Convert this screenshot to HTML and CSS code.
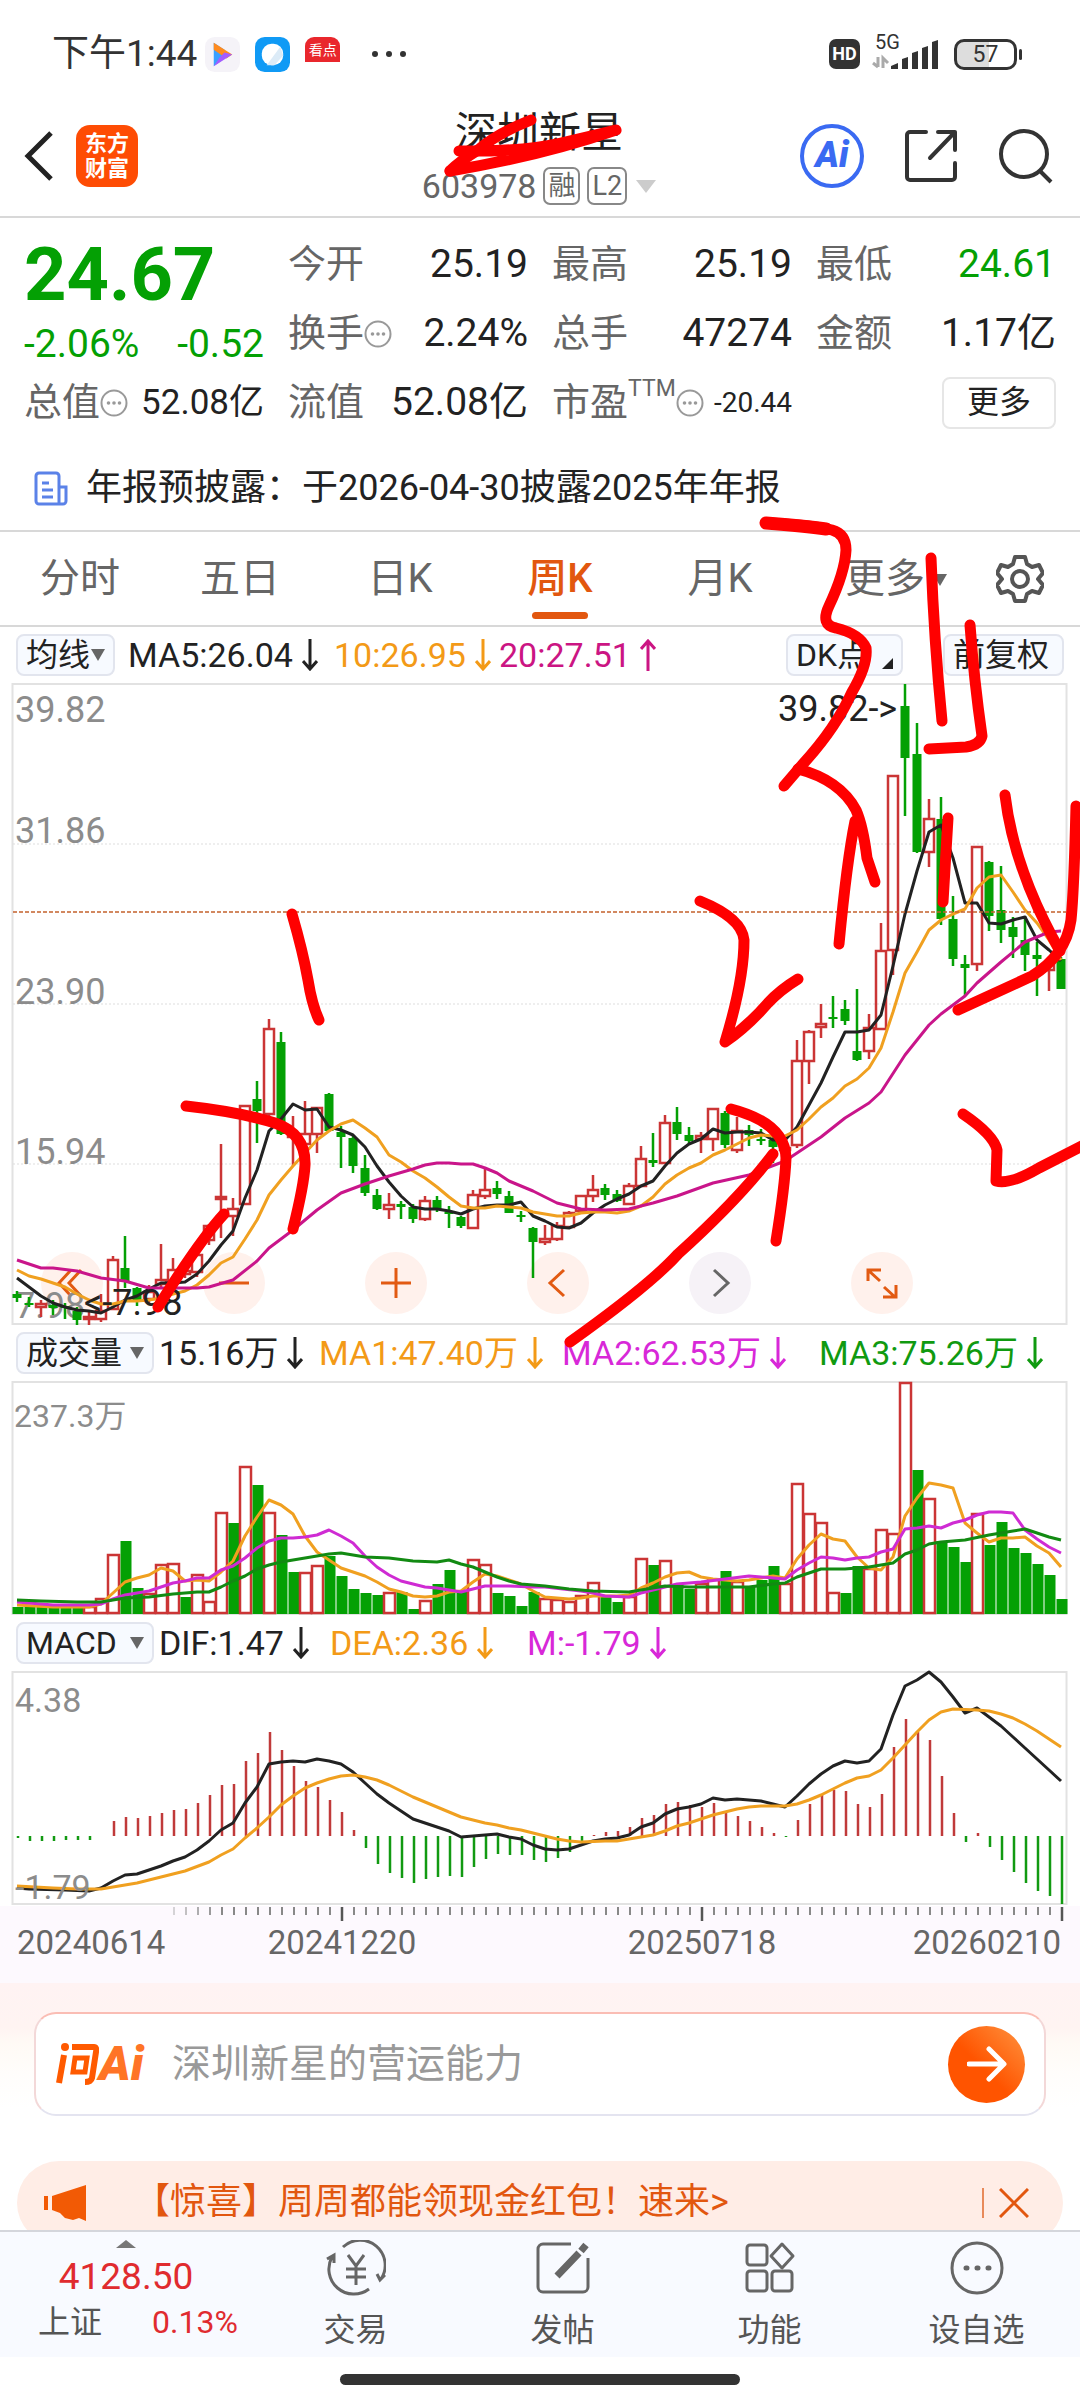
FILE: index.html
```html
<!DOCTYPE html>
<html lang="zh-CN">
<head>
<meta charset="utf-8">
<meta name="viewport" content="width=device-width, initial-scale=1">
<title>深圳新星 603978</title>
<link rel="stylesheet" href="styles.css">
</head>
<body>
<svg class="defs" aria-hidden="true">
  <symbol id="down" viewBox="0 0 16 32"><path d="M8 0V30M1 22l7 8 7-8" fill="none" stroke="currentColor" stroke-width="3"/></symbol>
  <symbol id="up" viewBox="0 0 16 32"><path d="M8 32V2M1 10l7-8 7 8" fill="none" stroke="currentColor" stroke-width="3"/></symbol>
  <symbol id="info" viewBox="0 0 28 28"><circle cx="14" cy="14" r="12.5" fill="none" stroke="#999" stroke-width="2"/><circle cx="8.500" cy="14" r="1.800" fill="#999"/><circle cx="14" cy="14" r="1.800" fill="#999"/><circle cx="19.500" cy="14" r="1.800" fill="#999"/></symbol>
</svg>

<div class="status">
  <span class="clock">下午1:44</span>
  <svg class="app" viewBox="0 0 36 36"><rect width="36" height="36" rx="10" fill="#f5f3f8"/><path d="M9 6L20 13v9L9 30z" fill="#3aa0ff"/><path d="M9 6L28 18 22 22 9 13z" fill="#ff8b1f"/><path d="M28 18L9 30l6-9 5-5z" fill="#a45cff"/></svg>
  <svg class="app" viewBox="0 0 36 36"><rect width="36" height="36" rx="10" fill="#109af5"/><rect x="7" y="7" width="22" height="22" rx="10" fill="#fff"/><path d="M26 10l3 9-9 10-8 0z" fill="#dcebf7"/></svg>
  <span class="app kandian">看点</span>
  <svg class="dots" viewBox="0 0 36 8"><circle cx="4" cy="4" r="3" fill="#333"/><circle cx="18" cy="4" r="3" fill="#333"/><circle cx="32" cy="4" r="3" fill="#333"/></svg>
  <span class="hd">HD</span>
  <div class="signal"><small>5G</small><svg width="70" height="36" viewBox="0 0 70 36"><path d="M6 31V21M1 27l5 4M11 32V22l5 5" stroke="#aaa" stroke-width="3" fill="none"/><path d="M19 33v-3l7-3v6zM30 33V23l6-2v12zM40 33V17l6-2v18zM50 33V12l6-2v23zM60 33V6l6-2v29z" fill="#333"/></svg></div>
  <span class="battery">57</span>
</div>

<header class="top">
  <div class="top-left">
    <button class="icon-btn" aria-label="返回"><svg width="30" height="52" viewBox="0 0 30 52"><path d="M27 3L4 26l23 23" fill="none" stroke="#222" stroke-width="5"/></svg></button>
    <a class="logo" href="#">东方<br>财富</a>
  </div>
  <div class="title">
    <h1>深圳新星</h1>
    <p><span>603978</span><b>融</b><b>L2</b><i class="tri wide"></i></p>
  </div>
  <div class="top-right">
    <button class="ai">Ai</button>
    <button class="icon-btn" aria-label="分享"><svg width="54" height="54" viewBox="0 0 54 54"><path d="M22 3H6a3 3 0 0 0-3 3v42a3 3 0 0 0 3 3h42a3 3 0 0 0 3-3V34M34 3h17v18M51 3L26 29" fill="none" stroke="#333" stroke-width="4" stroke-linecap="round" stroke-linejoin="round"/></svg></button>
    <button class="icon-btn" aria-label="搜索"><svg width="56" height="56" viewBox="0 0 56 56"><circle cx="26" cy="26" r="23" fill="none" stroke="#333" stroke-width="4"/><path d="M42 43l11 11" stroke="#333" stroke-width="4"/></svg></button>
  </div>
</header>

<main>
<section class="quote">
  <div class="price">
    <strong>24.67</strong>
    <div><span>-2.06%</span><span>-0.52</span></div>
  </div>
  <div class="stat"><span>今开</span><em>25.19</em></div>
  <div class="stat"><span>最高</span><em>25.19</em></div>
  <div class="stat"><span>最低</span><em class="green">24.61</em></div>
  <div class="stat"><span>换手<svg class="info"><use href="#info"/></svg></span><em>2.24%</em></div>
  <div class="stat"><span>总手</span><em>47274</em></div>
  <div class="stat"><span>金额</span><em>1.17亿</em></div>
  <div class="stat"><span>总值<svg class="info"><use href="#info"/></svg></span><em class="mid">52.08亿</em></div>
  <div class="stat"><span>流值</span><em>52.08亿</em></div>
  <div class="stat"><span>市盈<sup>TTM</sup><svg class="info"><use href="#info"/></svg></span><em class="small">-20.44</em></div>
  <button class="more">更多</button>
</section>

<a class="notice" href="#">
  <svg width="34" height="36" viewBox="0 0 34 36"><path d="M25 33V5a3 3 0 0 0-3-3H5a3 3 0 0 0-3 3v25a3 3 0 0 0 3 3h24a3 3 0 0 0 3-3V16h-7" fill="none" stroke="#5b82e8" stroke-width="3"/><path d="M8 12h7M8 19h11M8 26h11" stroke="#5b82e8" stroke-width="3"/></svg>
  <span>年报预披露：于2026-04-30披露2025年年报</span>
</a>

<nav class="tabs">
  <button>分时</button><button>五日</button><button>日K</button><button class="on">周K</button><button>月K</button><button class="drop">更多<i class="tri"></i></button>
  <button class="gear" aria-label="设置"><svg width="48" height="50" viewBox="0 0 48 50"><path d="M19 3h10l2 7 5 3 7-2 4 8-5 6 5 6-4 8-7-2-5 3-2 7H19l-2-7-5-3-7 2-4-8 5-6-5-6 4-8 7 2 5-3z" fill="none" stroke="#555" stroke-width="4" stroke-linejoin="round"/><circle cx="24" cy="25" r="8" fill="none" stroke="#555" stroke-width="4"/></svg></button>
</nav>

<section class="charts">
  <div class="legend ma">
    <button class="chip">均线<i class="tri"></i></button>
    <span>MA5:26.04<svg><use href="#down"/></svg></span>
    <span class="c-orange">10:26.95<svg><use href="#down"/></svg></span>
    <span class="c-pink">20:27.51<svg><use href="#up"/></svg></span>
    <button class="chip">DK点<i class="corner"></i></button>
    <button class="chip adj">前复权</button>
  </div>
  <div class="kline">
    <div class="tools">
      <button aria-label="最早"><svg viewBox="0 0 62 62"><path d="M30 18L18 31l12 13M40 18L28 31l12 13" /></svg></button>
      <button aria-label="缩小"><svg viewBox="0 0 62 62"><path d="M16 31h30"/></svg></button>
      <button aria-label="放大"><svg viewBox="0 0 62 62"><path d="M16 31h30M31 16v30"/></svg></button>
      <button aria-label="向左"><svg viewBox="0 0 62 62"><path d="M37 18L23 31l14 13"/></svg></button>
      <button class="off" aria-label="向右"><svg viewBox="0 0 62 62"><path d="M25 18l14 13-14 13"/></svg></button>
      <button aria-label="全屏"><svg viewBox="0 0 62 62"><path d="M17 29V18h13M18 19l11 10M33 35l11 10M45 33v12H32"/></svg></button>
    </div>
    <svg id="kline" class="plot" viewBox="0 0 1080 643"></svg>
  </div>
  <div class="legend vol">
    <button class="chip">成交量<i class="tri"></i></button>
    <span>15.16万<svg><use href="#down"/></svg></span>
    <span class="c-orange">MA1:47.40万<svg><use href="#down"/></svg></span>
    <span class="c-magenta">MA2:62.53万<svg><use href="#down"/></svg></span>
    <span class="c-green">MA3:75.26万<svg><use href="#down"/></svg></span>
  </div>
  <svg id="volume" class="plot" viewBox="0 0 1080 236"></svg>
  <div class="legend macd">
    <button class="chip">MACD<i class="tri"></i></button>
    <span>DIF:1.47<svg><use href="#down"/></svg></span>
    <span class="c-orange">DEA:2.36<svg><use href="#down"/></svg></span>
    <span class="c-magenta">M:-1.79<svg><use href="#down"/></svg></span>
  </div>
  <svg id="macd" class="plot" viewBox="0 0 1080 236"></svg>
  <svg id="axis" class="plot axis" viewBox="0 0 1080 77"></svg>
</section>

<section class="ask">
  <form class="ask-box">
    <label for="q"><svg width="44" height="42" viewBox="0 0 44 42"><g fill="none" stroke="#ff5a00" stroke-width="6"><path d="M9 12L4 40M17 4h22q3 0 2 5l-4 26q-1 4-7 4"/><path d="M20 15h12l-2 14H18z" stroke-width="5"/></g><circle cx="10" cy="4" r="4" fill="#ff5a00"/></svg><b>Ai</b></label>
    <input id="q" type="text" placeholder="深圳新星的营运能力">
    <button aria-label="提问"><svg width="40" height="36" viewBox="0 0 40 36"><path d="M2 18h34M22 3l15 15-15 15" fill="none" stroke="#fff" stroke-width="5" stroke-linecap="round" stroke-linejoin="round"/></svg></button>
  </form>
</section>

<aside class="promo">
  <svg width="42" height="38" viewBox="0 0 42 38"><path d="M0 12h4v14H0zM8 12L42 1v36l-7-3-6 2-8-2-5-5-8-3z" fill="#f25a05"/></svg>
  <a href="#">【惊喜】周周都能领现金红包！速来&gt;</a>
  <button aria-label="关闭"><svg width="30" height="30" viewBox="0 0 30 30"><path d="M1 1l28 28M29 1L1 29" stroke="#e2570f" stroke-width="3"/></svg></button>
</aside>
</main>

<footer class="dock">
  <nav>
    <a class="index" href="#"><i class="tri rise"></i><strong>4128.50</strong><span><em>上证</em><b>0.13%</b></span></a>
    <a href="#"><svg viewBox="0 0 60 56"><path d="M17 7a25 25 0 0 1 38 32M43 49A25 25 0 0 1 6 17M1 19l7-4v8M59 35l-5 5-3-6M22 15l8 11 8-11M30 26v19M20 29h20M20 37h20"/></svg>交易</a>
    <a href="#"><svg viewBox="0 0 60 56"><path d="M38 4H10a5 5 0 0 0-5 5v38a5 5 0 0 0 5 5h40a5 5 0 0 0 5-5V18"/><path d="M53 5l-5 6M46 13L24 36" stroke-width="7"/></svg>发帖</a>
    <a href="#"><svg viewBox="0 0 60 56"><rect x="7" y="5" width="20" height="20" rx="3"/><rect x="7" y="31" width="20" height="20" rx="3"/><rect x="32" y="31" width="20" height="20" rx="3"/><path d="M42 4l11 12-11 12-11-12z" stroke-linejoin="round"/></svg>功能</a>
    <a href="#"><svg viewBox="0 0 60 56"><circle cx="30" cy="28" r="25"/><path d="M19 28h1M30 28h1M41 28h1" stroke-width="5" stroke-linecap="round"/></svg>设自选</a>
  </nav>
  <div class="home"></div>
</footer>

<svg class="marks" viewBox="0 0 1080 2400" aria-hidden="true">
  <g fill="none" stroke="#f00" stroke-width="11" stroke-linecap="round" stroke-linejoin="round">
    <path d="M531 120Q496 134 478 150Q460 161 450 171"/>
    <path d="M459 151L512 149L560 143L616 131L560 147L510 161L452 171L510 155Z" fill="#f00" stroke="none"/>
    <path d="M459 151Q520 152 561 143L616 130Q540 156 450 171"/>
    <path d="M766 523Q812 525 832 530Q846 534 846 550Q845 572 829 606Q820 625 836 628Q860 634 866 648Q868 665 852 692Q836 728 802 765L784 786"/>
    <path d="M766 523Q805 526 826 529" stroke-width="13"/>
    <path d="M798 769Q840 780 856 810Q863 826 867 858L875 882M855 821Q847 860 839 944"/>
    <path d="M700 901Q742 918 744 940Q744 980 725 1042Q747 1027 768 1003Q780 990 798 979"/>
    <path d="M292 914Q303 952 308 980Q312 1005 319 1020"/>
    <path d="M186 1106Q240 1112 275 1123Q306 1134 305 1165Q304 1185 293 1229"/>
    <path d="M224 1214Q200 1240 158 1307"/>
    <path d="M773 1154Q740 1198 678 1254Q650 1285 570 1342"/>
    <path d="M731 1109Q785 1123 786 1158Q785 1185 776 1241"/>
    <path d="M931 558Q934 640 942 721"/>
    <path d="M970 625Q974 680 982 736Q980 745 966 747L929 749"/>
    <path d="M948 818L943 902"/>
    <path d="M1005 795Q1014 870 1060 951"/>
    <path d="M1076 806Q1074 890 1071 920Q1066 955 1032 976Q1010 986 958 1010"/>
    <path d="M963 1114Q994 1135 997 1150L996 1181Q1010 1185 1039 1168L1084 1145"/>
  </g>
</svg>
<script src="chart.js"></script>
</body>
</html>
```
FILE: styles.css
```css
* { box-sizing: border-box; }
body { margin: 0; background: #fff; color: #222; font-family: Roboto, "Noto Sans CJK SC", sans-serif; font-size: 34px; line-height: 1.2; position: relative; }
h1, p { margin: 0; font-weight: 400; }
button { font: inherit; color: inherit; background: none; border: 0; padding: 0; }
a { color: inherit; text-decoration: none; }
em, i { font-style: normal; }
svg { display: block; }
.defs { position: absolute; width: 0; height: 0; }

.tri { display: inline-block; border: 7px solid transparent; border-top: 12px solid #666; border-bottom: 0; }
.tri.wide { border-width: 13px 10px 0; border-top-color: #ccc; }
.tri.rise { border: 10px solid transparent; border-top: 0; border-bottom: 8px solid #777; }

.status { display: flex; align-items: center; height: 96px; padding: 12px 63px 0 52px; color: #333; }
.clock { font-size: 37px; margin-right: 8px; }
.app { width: 35px; height: 35px; margin-right: 15px; }
.kandian { background: linear-gradient(#e9272d 72%, #fff 72%); border-radius: 9px; color: #fff; font-size: 14px; line-height: 26px; text-align: center; }
.dots { width: 36px; height: 8px; margin: 0 auto 0 16px; }
.hd { background: #333; color: #fff; border-radius: 7px; font-size: 18px; font-weight: 700; line-height: 30px; width: 31px; text-align: center; }
.signal { position: relative; width: 70px; margin: 0 12px; }
.signal small { position: absolute; left: 3px; top: -6px; font-size: 20px; line-height: 24px; }
.battery { position: relative; width: 63px; height: 31px; border: 3px solid #333; border-radius: 10px; text-align: center; font-size: 23px; line-height: 26px; background: linear-gradient(90deg, #ddd 57%, #fff 57%); }
.battery::after { content: ""; position: absolute; right: -8px; top: 7px; width: 3px; height: 11px; background: #333; border-radius: 2px; }

.top { display: grid; grid-template-columns: 1fr auto 1fr; align-items: center; height: 122px; padding: 0 26px 0 24px; border-bottom: 2px solid #d8d8d8; }
.top-left { display: flex; align-items: center; gap: 22px; }
.logo { width: 62px; height: 62px; border-radius: 14px; background: #fe4c04; color: #fff; font-size: 22px; font-weight: 700; line-height: 25px; padding-top: 6px; text-align: center; }
.title { text-align: center; }
.title h1 { font-size: 42px; line-height: 60px; }
.title p { display: flex; align-items: center; justify-content: center; height: 46px; color: #666; font-size: 34px; }
.title b { margin-left: 7px; height: 38px; padding: 0 3px; border: 2px solid #888; border-radius: 7px; font-weight: 400; font-size: 27px; line-height: 34px; }
.title .tri { margin-left: 9px; }
.top-right { display: flex; align-items: center; justify-content: flex-end; gap: 40px; }
.ai { width: 64px; height: 64px; border: 4px solid #3a6af2; border-radius: 50%; color: #3a6af2; font-size: 36px; font-weight: 900; font-style: italic; }

.quote { display: grid; grid-template-columns: repeat(4, 1fr); grid-auto-rows: 69px; column-gap: 24px; padding: 12px 24px 0; }
.price { grid-row: span 2; color: #04a004; }
.price strong { display: block; font-size: 74px; font-weight: 700; line-height: 90px; }
.price div { display: flex; justify-content: space-between; font-size: 39px; line-height: 48px; }
.stat { display: flex; align-items: center; justify-content: space-between; font-size: 39px; white-space: nowrap; }
.stat span { display: flex; align-items: center; color: #666; font-size: 38px; }
.stat em.mid { font-size: 35px; }
.stat em.small { font-size: 28px; }
.stat .green { color: #04a004; }
.stat sup { align-self: flex-start; font-size: 23px; line-height: 18px; }
.info { width: 28px; height: 28px; }
.more { justify-self: end; align-self: center; width: 114px; height: 52px; border: 2px solid #e6e6e6; border-radius: 8px; font-size: 32px; }

.notice { display: flex; align-items: center; gap: 18px; height: 95px; padding: 10px 34px 0; border-bottom: 2px solid #d8d8d8; font-size: 36px; white-space: nowrap; }

.tabs { display: grid; grid-template-columns: repeat(6, 4fr) 3fr; height: 95px; border-bottom: 2px solid #d8d8d8; font-size: 40px; color: #666; }
.tabs button { position: relative; }
.tabs .drop { padding-left: 32px; white-space: nowrap; }
.tabs .tri { margin: 0 0 6px 8px; }
.tabs .on { color: #e2570f; font-weight: 500; }
.tabs .on::after { content: ""; position: absolute; left: 50%; bottom: 6px; width: 56px; height: 7px; margin-left: -28px; border-radius: 4px; background: #e2570f; }
.gear svg { margin: 0 auto; }

.legend { display: grid; align-items: center; height: 54px; padding: 0 16px; white-space: nowrap; }
.legend.ma { height: 56px; grid-template-columns: 112px 206px 165px 1fr 117px 161px; }
.legend.vol { grid-template-columns: 143px 160px 243px 257px 1fr; }
.legend.macd { grid-template-columns: 143px 171px 197px 1fr; }
.legend span { display: flex; align-items: center; gap: 9px; }
.legend span svg { width: 16px; height: 32px; }
.chip { display: flex; align-items: center; justify-content: space-between; height: 42px; padding: 0 8px; border: 2px solid #e2e5ee; border-radius: 8px; background: #f7faff; font-size: 32px; line-height: 38px; }
.ma .chip:first-child { width: 99px; }
.chip.adj { justify-self: end; width: 121px; }
.vol .chip, .macd .chip { width: 138px; }
.corner { align-self: flex-end; margin-bottom: 5px; border-left: 11px solid transparent; border-bottom: 11px solid #222; }
.c-orange { color: #f39a17; }
.c-pink { color: #cb1583; }
.c-magenta { color: #d828d8; }
.c-green { color: #109a10; }

.plot { width: 100%; height: auto; position: relative; pointer-events: none; }
.kline { position: relative; }
.tools { position: absolute; left: 3.8%; right: 15.5%; bottom: 12px; display: flex; justify-content: space-between; }
.tools button { width: 62px; height: 62px; border-radius: 50%; background: #fff1ec; }
.tools .off { background: #f6f2f7; }
.tools path { fill: none; stroke: #e25a12; stroke-width: 3; }
.tools .off path { stroke: #666; }
.axis { background: #fdf9fe; }

.ask { padding: 29px 34px 45px; background: linear-gradient(#fff3f3 0, #fff4f2 45px, #fffaf5 60px, #fffdfb 90px, #fff 125px); }
.ask-box { display: flex; align-items: center; height: 104px; padding: 0 19px; border: 2px solid #f3d8d8; border-top-color: #fabdb4; border-bottom-color: #e4e4f0; border-radius: 22px; background: #fff; }
.ask-box label { display: flex; align-items: center; width: 93px; color: #ff7426; }
.ask-box b { font-size: 48px; font-weight: 900; font-style: italic; line-height: 48px; }
.ask-box input { flex: 1; min-width: 0; margin: 0 24px; border: 0; outline: 0; padding: 0; font: inherit; font-size: 39px; background: none; }
.ask-box input::placeholder { color: #999; opacity: 1; }
.ask-box button { display: grid; place-items: center; width: 77px; height: 77px; border-radius: 50%; background: linear-gradient(45deg, #ff5400 45%, #ff9440); }

.promo { display: flex; align-items: center; height: 84px; margin: 0 17px 155px; padding: 0 34px 0 27px; border-radius: 42px; background: #ffede6; color: #e2570f; font-size: 36px; }
.promo a { flex: 1; margin-left: 48px; white-space: nowrap; }
.promo button { padding-left: 15px; border-left: 2px solid #e88a5a; }

.dock { position: fixed; left: 0; right: 0; bottom: 0; background: #fff; }
.dock nav { display: grid; grid-template-columns: 252px repeat(4, 1fr); height: 127px; background: #f8faff; border-top: 2px solid #d4d6dc; color: #555; font-size: 32px; }
.dock a { display: flex; flex-direction: column; align-items: center; padding-top: 8px; line-height: 46px; }
.dock a svg { width: 60px; height: 56px; margin-bottom: 11px; fill: none; stroke: #666; stroke-width: 3; }
.dock .index { color: #e02b2f; }
.index strong { font-size: 37px; font-weight: 400; line-height: 56px; margin-top: 1px; }
.index span { display: flex; gap: 50px; line-height: 34px; padding-left: 24px; }
.index em { color: #555; }
.index b { font-weight: 400; }
.home { width: 37%; height: 11px; margin: 17px auto 15px; border-radius: 6px; background: #333; }

.marks { position: absolute; left: 0; top: 0; width: 100%; height: auto; pointer-events: none; overflow: hidden; z-index: 5; }
```
FILE: chart.js
```js
const GREEN = '#04a004', RED = '#cb3535', ORANGE = '#f0a020', BLACK = '#222', PINK = '#c9158a', MAGENTA = '#cf2bd3';
const x = i => 17 + i * 12;
const el = (name, a, text) => {
  const e = document.createElementNS('http://www.w3.org/2000/svg', name);
  for (const k in a) e.setAttribute(k, a[k]);
  if (text) e.textContent = text;
  return e;
};
const line = (svg, pts, color, scale, w = 3) =>
  svg.append(el('polyline', { points: pts.map(p => x(p[0]) + ',' + scale(p[1])).join(' '), fill: 'none', stroke: color, 'stroke-width': w, 'stroke-linejoin': 'round' }));
const series = (a, start = 0) => a.map((v, i) => [i + start, v]);
const frame = (svg, y, h) => svg.append(el('rect', { x: 12.5, y, width: 1054, height: h, fill: 'none', stroke: '#e2e2e2', 'stroke-width': 2 }));
const label = (svg, tx, ty, s, color = '#8c8c8c', size = 36, anchor = 'start') =>
  svg.append(el('text', { x: tx, y: ty, fill: color, 'font-size': size, 'text-anchor': anchor }, s));

// weekly candles: direction, high, body top, body bottom, low
const candles = `g 1410 1416 1426 1434|g 1422 1436 1440 1446|r 1430 1440 1446 1468|g 1430 1442 1448 1465|g 1436 1444 1448 1473|g 1445 1454 1476 1487|r 1455 1470 1474 1487|r 1415 1454 1474 1480|r 1328 1338 1450 1452|g 1282 1356 1387 1402|g 1400 1403 1430 1443|r 1396 1412 1428 1440|r 1300 1383 1393 1400|r 1332 1360 1390 1395|r 1345 1362 1370 1380|r 1318 1325 1366 1376|r 1255 1260 1292 1302|r 1070 1192 1198 1287|r 1195 1221 1235 1283|r 980 982 1208 1210|g 924 966 995 1068|r 782 806 1000 1005|g 812 835 1047 1049|r 1006 1050 1054 1122|r 970 1048 1070 1072|r 985 987 1047 1090|g 952 954 1040 1043|g 1028 1042 1054 1125|g 1050 1056 1120 1137|g 1095 1125 1184 1190|g 1175 1187 1221 1222|r 1182 1210 1221 1243|g 1202 1209 1215 1243|g 1208 1216 1244 1253|r 1190 1201 1242 1248|g 1190 1200 1220 1226|g 1213 1228 1232 1264|g 1235 1238 1260 1263|r 1177 1187 1264 1265|r 1127 1177 1190 1197|g 1155 1171 1186 1197|g 1178 1190 1229 1230|g 1225 1234 1237 1250|g 1262 1264 1297 1380|r 1256 1290 1295 1302|r 1251 1258 1290 1294|r 1225 1230 1262 1264|r 1187 1189 1224 1226|r 1142 1176 1191 1203|g 1163 1172 1187 1199|g 1176 1186 1201 1203|r 1160 1166 1208 1210|r 1075 1105 1167 1170|g 1044 1106 1114 1124|r 1003 1021 1114 1115|g 986 1020 1046 1060|g 1032 1050 1064 1068|r 1042 1052 1059 1090|r 988 990 1058 1086|g 995 998 1073 1080|r 1008 1040 1084 1092|g 1026 1038 1050 1075|g 1036 1058 1062 1072|g 1055 1062 1078 1113|r 1076 1079 1084 1100|r 830 880 1073 1080|r 808 811 878 933|r 748 793 800 826|g 728 777 781 802|g 738 759 786 797|g 712 856 876 878|r 771 802 855 875|r 560 625 804 808|r 222 223 622 680|g 10 60 180 315|g 101 171 398 399|r 275 320 397 432|g 270 321 552 566|g 498 551 643 661|g 635 656 664 730|r 384 385 655 672|g 418 420 545 580|g 430 531 576 608|g 548 570 594 642|g 545 600 635 672|g 605 634 644 729|r 640 652 670 718|g 640 643 712 714`.split('|').map(s => s.split(' '));

const k = document.getElementById('kline');
const ky = v => Math.round((v - 10) * 640 / 1475) + 1;
frame(k, 1, 640);
[160, 320, 480].forEach(d => k.append(el('path', { d: `M13 ${d + 1}H1066`, stroke: '#ddd', 'stroke-dasharray': '2 2' })));
label(k, 15, 39, '39.82'); label(k, 15, 160, '31.86'); label(k, 15, 321, '23.90'); label(k, 15, 481, '15.94'); label(k, 15, 635, '7.98');
candles.forEach(([c, h, t, b, l], i) => {
  const color = c === 'g' ? GREEN : RED, top = ky(t), hgt = Math.max(ky(b) - top, 2);
  k.append(el('path', { d: `M${x(i)} ${ky(h)}V${top}M${x(i)} ${top + hgt}V${ky(l)}`, stroke: color, 'stroke-width': 2.5 }));
  k.append(el('rect', c === 'g' ? { x: x(i) - 4.5, y: top, width: 9, height: hgt, fill: color }
    : { x: x(i) - 5, y: top, width: 10, height: hgt, fill: 'none', stroke: color, 'stroke-width': 2.5 }));
});
line(k, series([1380, 1400, 1420, 1436, 1446, 1452, 1456, 1459, 1445, 1430, 1420, 1405, 1390, 1391, 1388, 1370, 1340, 1302, 1271, 1195, 1130, 1040, 1012, 978, 991, 989, 1032, 1037, 1050, 1077, 1122, 1158, 1190, 1215, 1219, 1220, 1224, 1232, 1220, 1214, 1210, 1210, 1203, 1235, 1248, 1262, 1263, 1252, 1230, 1210, 1197, 1185, 1168, 1155, 1120, 1092, 1070, 1058, 1036, 1045, 1043, 1042, 1044, 1062, 1060, 1030, 980, 930, 870, 812, 811, 808, 773, 660, 540, 440, 350, 336, 410, 515, 515, 560, 563, 555, 548, 600, 622, 648]), BLACK, ky);
line(k, series([1360, 1375, 1382, 1390, 1400, 1415, 1430, 1438, 1438, 1433, 1432, 1430, 1425, 1417, 1408, 1395, 1372, 1345, 1331, 1288, 1245, 1188, 1154, 1122, 1090, 1062, 1040, 1025, 1014, 1034, 1055, 1096, 1112, 1132, 1148, 1170, 1192, 1212, 1218, 1217, 1214, 1216, 1217, 1226, 1232, 1236, 1235, 1230, 1227, 1227, 1230, 1225, 1212, 1192, 1163, 1142, 1126, 1113, 1096, 1084, 1070, 1056, 1050, 1052, 1052, 1037, 1012, 985, 964, 937, 920, 895, 850, 765, 676, 628, 577, 555, 540, 528, 480, 455, 450, 490, 530, 560, 600, 645]), ORANGE, ky);
line(k, [[0, 1338], [2, 1356], [3, 1357], [5, 1364], [7, 1380], [9, 1387], [11, 1401], [13, 1403], [15, 1403], [16, 1400], [18, 1383], [20, 1340], [21, 1310], [23, 1268], [25, 1223], [27, 1184], [29, 1162], [31, 1144], [33, 1127], [34, 1118], [35, 1114], [36, 1113], [37, 1117], [38, 1116], [39, 1125], [40, 1136], [41, 1156], [43, 1178], [45, 1205], [47, 1220], [49, 1222], [51, 1220], [53, 1207], [55, 1190], [58, 1160], [61, 1142], [64, 1110], [67, 1055], [69, 1010], [71, 975], [72, 950], [74, 865], [76, 797], [77, 770], [79, 730], [80, 700], [82, 650], [84, 605], [86, 582], [87, 580]], PINK, ky);
k.append(el('path', { d: 'M13 229H1066', stroke: '#c4622c', 'stroke-width': 1.5, 'stroke-dasharray': '4 2' }));
label(k, 778, 38, '39.82->', BLACK); label(k, 84, 632, '<-7.98', BLACK);

// weekly turnover bars
const vol = `g862 g858 g858 g864 g864 g864 r862 r838 r704 g663 g803 r823 r736 r732 g830 r764 r846 r578 g608 r440 g496 r579 g646 g756 r759 r737 g709 g768 g808 g820 g824 r818 g817 g866 r842 g792 g750 g816 r719 r734 g818 g828 g857 g816 r836 r840 r846 r828 r788 g832 g846 r832 r718 g736 r722 g793 g806 r792 r780 g752 r786 g800 g780 g738 r792 r491 r583 r608 r818 g818 g737 r748 r631 r641 r188 g451 r537 g664 g682 g726 r582 g675 g606 g685 g698 g731 g765 g838`.split(' ');
const v = document.getElementById('volume');
const vy = n => Math.round((n - 186) / 3) + 2;
frame(v, 2, 232);
vol.forEach((s, i) => {
  const top = vy(+s.slice(1)), red = s[0] === 'r';
  v.append(el('rect', red ? { x: x(i) - 5, y: top, width: 11, height: 233 - top, fill: '#fff', stroke: RED, 'stroke-width': 2.5 }
    : { x: x(i) - 4.5, y: top, width: 11, height: 234 - top, fill: GREEN }));
});
line(v, [[0, 855], [3, 860], [6, 860], [7, 852], [8, 820], [9, 786], [10, 773], [11, 766], [12, 745], [13, 754], [14, 782], [15, 780], [16, 782], [17, 755], [18, 724], [19, 648], [20, 592], [21, 541], [22, 555], [23, 582], [24, 648], [25, 697], [26, 720], [27, 745], [28, 756], [29, 768], [30, 785], [31, 806], [32, 816], [33, 828], [34, 832], [35, 828], [36, 815], [37, 812], [38, 785], [39, 763], [40, 767], [41, 780], [42, 792], [43, 812], [44, 830], [46, 838], [47, 834], [48, 828], [50, 828], [51, 825], [52, 805], [53, 790], [54, 770], [55, 760], [56, 755], [57, 770], [58, 777], [60, 783], [61, 780], [62, 775], [63, 768], [64, 775], [65, 718], [66, 675], [67, 643], [68, 658], [69, 664], [70, 710], [71, 745], [72, 750], [73, 712], [74, 588], [75, 535], [76, 490], [77, 496], [78, 505], [79, 610], [80, 640], [81, 665], [82, 655], [83, 655], [84, 650], [85, 678], [86, 698], [87, 742]], ORANGE, vy);
line(v, [[0, 846], [1, 850], [3, 856], [6, 855], [7, 852], [8, 838], [9, 824], [10, 818], [11, 812], [12, 802], [13, 788], [14, 783], [15, 774], [16, 774], [17, 750], [18, 738], [19, 715], [20, 685], [21, 662], [22, 653], [23, 655], [24, 650], [25, 645], [26, 631], [27, 648], [28, 670], [29, 708], [30, 742], [31, 765], [32, 782], [33, 792], [34, 800], [35, 805], [36, 810], [37, 815], [38, 808], [39, 797], [41, 798], [43, 802], [44, 800], [47, 812], [48, 820], [49, 828], [51, 832], [52, 820], [54, 800], [55, 793], [57, 787], [59, 778], [61, 768], [62, 772], [63, 773], [64, 778], [65, 750], [66, 728], [67, 710], [68, 714], [69, 720], [70, 715], [71, 710], [72, 697], [73, 687], [74, 628], [75, 624], [76, 618], [77, 624], [78, 610], [79, 600], [80, 585], [81, 577], [82, 575], [83, 580], [84, 630], [85, 658], [86, 680], [87, 698]], MAGENTA, vy);
line(v, [[0, 839], [2, 842], [5, 846], [7, 847], [9, 833], [11, 830], [13, 823], [15, 816], [16, 815], [17, 800], [18, 783], [19, 768], [20, 748], [21, 735], [22, 725], [24, 715], [26, 703], [27, 700], [28, 704], [29, 710], [31, 713], [33, 722], [35, 726], [36, 720], [37, 732], [38, 740], [39, 755], [40, 770], [41, 782], [42, 792], [43, 796], [44, 797], [46, 808], [48, 813], [51, 815], [53, 803], [54, 797], [56, 800], [58, 802], [61, 800], [63, 793], [64, 790], [65, 772], [67, 748], [69, 748], [71, 740], [73, 730], [74, 703], [75, 690], [76, 673], [77, 665], [79, 659], [81, 645], [82, 638], [83, 633], [84, 628], [85, 640], [86, 650], [87, 661]], '#128a12', vy);
label(v, 14, 47, '237.3万', '#8c8c8c', 32);

// MACD histogram and lines
const hist = [684, 692, 692, 692, 689, 689, 689, 678, 633, 621, 625, 618, 609, 600, 597, 579, 555, 525, 522, 453, 430, 366, 420, 468, 513, 531, 570, 605, 660, 713, 762, 789, 803, 819, 807, 800, 797, 801, 770, 747, 732, 735, 735, 750, 755, 744, 725, 700, 675, 666, 663, 652, 624, 615, 582, 576, 585, 591, 579, 606, 618, 633, 652, 669, 681, 630, 582, 555, 540, 543, 582, 591, 552, 411, 327, 366, 390, 498, 609, 695, 669, 711, 750, 786, 819, 843, 858, 882];
const m = document.getElementById('macd');
frame(m, 2, 232);
hist.forEach((n, i) => m.append(el('path', { d: `M${x(i) + 1} ${vy(678)}V${vy(n)}`, stroke: n < 678 ? '#c03a3a' : '#129a12', 'stroke-width': 2.5 })));
line(m, [[0, 834], [1, 838], [4, 840], [6, 843], [7, 835], [8, 812], [9, 795], [10, 791], [11, 780], [12, 768], [13, 753], [14, 740], [15, 720], [16, 692], [17, 660], [18, 638], [19, 580], [20, 530], [21, 462], [22, 456], [23, 453], [24, 455], [25, 447], [26, 452], [27, 462], [28, 487], [29, 520], [30, 553], [31, 580], [33, 627], [35, 650], [36, 663], [37, 681], [38, 678], [39, 675], [40, 672], [41, 680], [42, 687], [43, 705], [44, 717], [45, 720], [46, 717], [47, 705], [48, 692], [49, 686], [50, 683], [51, 675], [52, 652], [53, 640], [54, 613], [55, 597], [56, 590], [57, 582], [58, 564], [59, 570], [60, 567], [61, 570], [62, 573], [63, 581], [64, 592], [65, 558], [66, 522], [67, 492], [68, 468], [69, 453], [70, 458], [71, 453], [72, 416], [73, 315], [74, 228], [75, 210], [76, 187], [77, 215], [78, 262], [79, 308], [80, 295], [81, 320], [82, 348], [83, 380], [84, 415], [85, 448], [86, 480], [87, 513]], BLACK, vy);
line(m, [[0, 828], [3, 833], [5, 836], [7, 837], [8, 830], [10, 819], [12, 801], [14, 783], [16, 756], [17, 735], [18, 716], [19, 685], [20, 655], [21, 620], [22, 586], [23, 557], [24, 535], [25, 518], [26, 507], [27, 498], [28, 495], [29, 500], [30, 511], [31, 525], [32, 542], [33, 560], [34, 575], [35, 590], [36, 606], [37, 620], [38, 630], [39, 638], [40, 645], [41, 653], [42, 660], [43, 669], [44, 678], [45, 686], [46, 692], [47, 695], [49, 694], [50, 692], [51, 687], [52, 680], [53, 675], [54, 663], [55, 648], [56, 638], [57, 628], [58, 615], [59, 606], [60, 598], [61, 592], [62, 588], [64, 588], [65, 582], [66, 570], [67, 555], [68, 537], [69, 518], [70, 505], [71, 498], [72, 480], [73, 445], [74, 405], [75, 365], [76, 330], [77, 305], [78, 297], [80, 300], [81, 303], [82, 311], [83, 325], [84, 341], [85, 362], [86, 386], [87, 411]], ORANGE, vy);
label(m, 15, 42, '4.38', '#8c8c8c', 34); label(m, 15, 229, '-1.79', '#8c8c8c', 34);

const a = document.getElementById('axis');
for (let i = 13; i < 88; i++) {
  const major = i === 27 || i === 57 || i === 87;
  a.append(el('path', { d: `M${x(i) + 1} 1V${major ? 15 : 9}`, stroke: major ? '#555' : '#888', 'stroke-width': major ? 2.5 : 2, opacity: Math.min(1, (i - 11) / 6) }));
}
label(a, 17, 48, '20240614', '#666', 33); label(a, 342, 48, '20241220', '#666', 33, 'middle');
label(a, 702, 48, '20250718', '#666', 33, 'middle'); label(a, 1061, 48, '20260210', '#666', 33, 'end');
```
